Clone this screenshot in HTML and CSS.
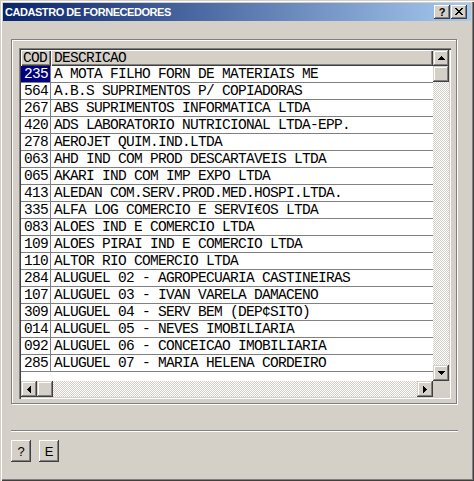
FILE: index.html
```html
<!DOCTYPE html>
<html>
<head>
<meta charset="utf-8">
<title>Cadastro de Fornecedores</title>
<link rel="stylesheet" href="styles.css">
</head>
<body>
<div class="window">
  <div class="titlebar">
    <span class="title">CADASTRO DE FORNECEDORES</span>
    <div class="caption-btns">
      <div class="cbtn help">?</div>
      <div class="cbtn close">
        <svg width="8" height="7" viewBox="0 0 8 7" shape-rendering="crispEdges"><path d="M0 0h2v1h1v1h2v-1h1v-1h2v1h-1v1h-1v1h-1v1h1v1h1v1h1v1h-2v-1h-1v-1h-2v1h-1v1h-2v-1h1v-1h1v-1h1v-1h-1v-1h-1v-1h-1z" fill="#000"/></svg>
      </div>
    </div>
  </div>
  <div class="client">
    <div class="groupbox">
      <div class="grid">
        <div class="data">
          <div class="row head"><div class="c1 hc">COD</div><div class="c2 hc">DESCRICAO</div></div>
          <div class="row"><div class="c1 sel">235</div><div class="c2">A MOTA FILHO FORN DE MATERIAIS ME</div></div>
          <div class="row"><div class="c1">564</div><div class="c2">A.B.S SUPRIMENTOS P/ COPIADORAS</div></div>
          <div class="row"><div class="c1">267</div><div class="c2">ABS SUPRIMENTOS INFORMATICA LTDA</div></div>
          <div class="row"><div class="c1">420</div><div class="c2">ADS LABORATORIO NUTRICIONAL LTDA-EPP.</div></div>
          <div class="row"><div class="c1">278</div><div class="c2">AEROJET QUIM.IND.LTDA</div></div>
          <div class="row"><div class="c1">063</div><div class="c2">AHD IND COM PROD DESCARTAVEIS LTDA</div></div>
          <div class="row"><div class="c1">065</div><div class="c2">AKARI IND COM IMP EXPO LTDA</div></div>
          <div class="row"><div class="c1">413</div><div class="c2">ALEDAN COM.SERV.PROD.MED.HOSPI.LTDA.</div></div>
          <div class="row"><div class="c1">335</div><div class="c2">ALFA LOG COMERCIO E SERVI€OS LTDA</div></div>
          <div class="row"><div class="c1">083</div><div class="c2">ALOES IND E COMERCIO LTDA</div></div>
          <div class="row"><div class="c1">109</div><div class="c2">ALOES PIRAI IND E COMERCIO LTDA</div></div>
          <div class="row"><div class="c1">110</div><div class="c2">ALTOR RIO COMERCIO LTDA</div></div>
          <div class="row"><div class="c1">284</div><div class="c2">ALUGUEL 02 - AGROPECUARIA CASTINEIRAS</div></div>
          <div class="row"><div class="c1">107</div><div class="c2">ALUGUEL 03 - IVAN VARELA DAMACENO</div></div>
          <div class="row"><div class="c1">309</div><div class="c2">ALUGUEL 04 - SERV BEM (DEP¢SITO)</div></div>
          <div class="row"><div class="c1">014</div><div class="c2">ALUGUEL 05 - NEVES IMOBILIARIA</div></div>
          <div class="row"><div class="c1">092</div><div class="c2">ALUGUEL 06 - CONCEICAO IMOBILIARIA</div></div>
          <div class="row"><div class="c1">285</div><div class="c2">ALUGUEL 07 - MARIA HELENA CORDEIRO</div></div>
        </div>
        <div class="vscroll">
          <div class="sbtn"><svg width="7" height="4" viewBox="0 0 7 4" shape-rendering="crispEdges"><path d="M3 0h1v1h1v1h1v1h1v1h-7v-1h1v-1h1v-1h1z" fill="#000"/></svg></div>
          <div class="sbtn"></div>
          <div class="track"></div>
          <div class="sbtn"><svg width="7" height="4" viewBox="0 0 7 4" shape-rendering="crispEdges"><path d="M0 0h7v1h-1v1h-1v1h-1v1h-1v-1h-1v-1h-1v-1h-1z" fill="#000"/></svg></div>
        </div>
        <div class="hscroll">
          <div class="sbtn"><svg width="4" height="7" viewBox="0 0 4 7" shape-rendering="crispEdges"><path d="M3 0h1v7h-1v-1h-1v-1h-1v-1h-1v-1h1v-1h1v-1h1z" fill="#000"/></svg></div>
          <div class="sbtn"></div>
          <div class="track"></div>
          <div class="sbtn"><svg width="4" height="7" viewBox="0 0 4 7" shape-rendering="crispEdges"><path d="M0 0h1v1h1v1h1v1h1v1h-1v1h-1v1h-1v1h-1z" fill="#000"/></svg></div>
        </div>
        <div class="corner"></div>
      </div>
    </div>
    <div class="separator"></div>
    <div class="buttons">
      <div class="pbtn">?</div>
      <div class="pbtn">E</div>
    </div>
  </div>
</div>
</body>
</html>
```
FILE: styles.css
```css
* { box-sizing: border-box; }
html, body { margin: 0; padding: 0; }
body { background: #D4D0C8; width: 474px; height: 481px; overflow: hidden; }

.window {
  width: 474px;
  height: 481px;
  background: #D4D0C8;
  padding: 3px;
  box-shadow: inset 1px 1px #D4D0C8, inset 2px 2px #fff, inset -1px -1px #404040, inset -2px -2px #808080;
  display: flex;
  flex-direction: column;
}

.titlebar {
  height: 18px;
  background: linear-gradient(to right, #0A246A, #A6CAF0);
  display: flex;
  align-items: center;
  justify-content: space-between;
  padding: 0 4px 0 2px;
}
.title {
  font: bold 11px "Liberation Sans", sans-serif;
  letter-spacing: -0.45px;
  color: #fff;
  white-space: nowrap;
}
.caption-btns { display: flex; gap: 1px; }
.cbtn {
  width: 16px;
  height: 14px;
  background: #D4D0C8;
  box-shadow: inset -1px -1px #404040, inset 1px 1px #fff, inset -2px -2px #808080;
  display: flex;
  align-items: center;
  justify-content: center;
  font: bold 11px "Liberation Sans", sans-serif;
  color: #000;
  line-height: 14px;
  padding-bottom: 1px;
}
.cbtn.close { padding: 0 1px 1px 0; }

.client {
  flex: 1;
  padding: 18px 0 0 8px;
  display: flex;
  flex-direction: column;
}

.groupbox {
  width: 446px;
  height: 365px;
  border: 1px solid #808080;
  box-shadow: inset 1px 1px #fff, 1px 1px #fff;
  padding: 8px 0 0 7px;
}

.grid {
  width: 432px;
  height: 351px;
  padding: 2px;
  box-shadow: inset 1px 1px #808080, inset 2px 2px #404040, inset -1px -1px #fff, inset -2px -2px #D4D0C8;
  display: grid;
  grid-template-columns: 412px 16px;
  grid-template-rows: 331px 16px;
}

.data {
  background: #fff;
  overflow: hidden;
  font-family: "Liberation Mono", monospace;
  font-size: 14.5px;
  letter-spacing: -0.7px;
  color: #000;
}
.row {
  display: flex;
  height: 17px;
  border-bottom: 1px solid #808080;
  line-height: 16px;
  white-space: pre;
}
.row.head { height: 16px; border-bottom: 0; }
.c1 {
  width: 30px;
  flex: none;
  padding-left: 3px;
  border-right: 1px solid #808080;
}
.c2 { flex: 1; padding-left: 3px; }
.hc {
  background: #D4D0C8;
  border-right: 0;
  box-shadow: inset 1px 1px #fff, inset -1px -1px #404040, inset -2px -2px #808080;
}
.c1.hc { padding-left: 2px; }
.sel { background: #000080; color: #fff; }

.vscroll { display: flex; flex-direction: column; }
.hscroll { display: flex; }
.track {
  flex: 1;
  background: repeating-conic-gradient(#D4D0C8 0 25%, #fff 0 50%) 0 0 / 2px 2px;
}
.sbtn {
  width: 16px;
  height: 16px;
  flex: none;
  background: #D4D0C8;
  box-shadow: inset -1px -1px #404040, inset 1px 1px #D4D0C8, inset -2px -2px #808080, inset 2px 2px #fff;
  display: flex;
  align-items: center;
  justify-content: center;
}
.sbtn svg { display: block; }
.corner { background: #D4D0C8; }

.separator {
  margin-top: 26px;
  width: 447px;
  height: 2px;
  border-top: 1px solid #808080;
  border-bottom: 1px solid #fff;
}

.buttons {
  margin-top: 8px;
  display: flex;
  gap: 8px;
}
.pbtn {
  width: 20px;
  height: 22px;
  background: #D4D0C8;
  box-shadow: inset -1px -1px #404040, inset 1px 1px #fff, inset -2px -2px #808080;
  display: flex;
  align-items: center;
  justify-content: center;
  font: 13px "Liberation Sans", sans-serif;
  color: #000;
}
```
